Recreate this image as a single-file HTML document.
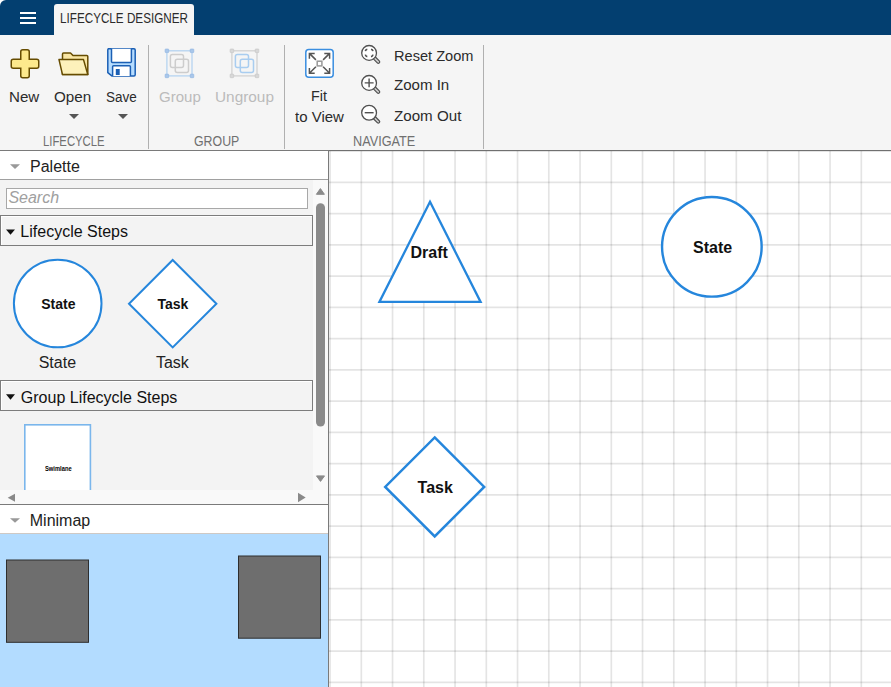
<!DOCTYPE html>
<html><head><meta charset="utf-8">
<style>
html,body{margin:0;padding:0;width:891px;height:687px;overflow:hidden;background:#fff;position:relative;font-family:"Liberation Sans",sans-serif;}
.a{position:absolute;}
.t{position:absolute;line-height:1;white-space:nowrap;font-family:"Liberation Sans",sans-serif;}
svg{position:absolute;overflow:visible}
</style></head><body>

<!-- top bar -->
<div class="a" style="left:0;top:0;width:891px;height:35px;background:#033f70;border-top-left-radius:6px;"></div>
<div class="a" style="left:20px;top:12px;width:16px;height:2px;background:#fff"></div>
<div class="a" style="left:20px;top:17px;width:16px;height:2px;background:#fff"></div>
<div class="a" style="left:20px;top:22px;width:16px;height:2px;background:#fff"></div>
<div class="a" style="left:54px;top:4px;width:140px;height:31px;background:#f5f5f5;border-radius:3px 3px 0 0"></div>

<!-- ribbon -->
<div class="a" style="left:0;top:35px;width:891px;height:115px;background:#f5f5f5"></div>
<div class="a" style="left:0;top:150px;width:891px;height:1px;background:#7a7a7a"></div>
<div class="a" style="left:148px;top:45px;width:1px;height:104px;background:#b0b0b0"></div>
<div class="a" style="left:284px;top:45px;width:1px;height:104px;background:#b0b0b0"></div>
<div class="a" style="left:483px;top:45px;width:1px;height:104px;background:#b0b0b0"></div>

<svg style="left:0;top:0" width="891" height="151">
 <!-- plus -->
 <path d="M22.75,49.75 h4.5 a2,2 0 0 1 2,2 v7.5 h7.5 a2,2 0 0 1 2,2 v5 a2,2 0 0 1 -2,2 h-7.5 v7.5 a2,2 0 0 1 -2,2 h-4.5 a2,2 0 0 1 -2,-2 v-7.5 h-7.5 a2,2 0 0 1 -2,-2 v-5 a2,2 0 0 1 2,-2 h7.5 v-7.5 a2,2 0 0 1 2,-2 z" fill="#fde98c" stroke="#664c00" stroke-width="1.5"/>
 <!-- folder -->
 <path d="M62.5,74.5 V54 a1,1 0 0 1 1,-1 H70.5 L73,55.6 H86.8 a1,1 0 0 1 1,1 V74.5 Z" fill="#f9e6a4" stroke="#664c00" stroke-width="1.5" stroke-linejoin="round"/>
 <path d="M59,59.6 H83.5 L87.8,74.6 H62.5 Z" fill="#fdf1bb" stroke="#664c00" stroke-width="1.5" stroke-linejoin="round"/>
 <!-- floppy -->
 <path d="M108.5,48.75 H134 a1.2,1.2 0 0 1 1.2,1.2 V74.7 a1.2,1.2 0 0 1 -1.2,1.2 H111.8 L107.8,72.7 V49.9 a1.2,1.2 0 0 1 0.7,-1.15 z" fill="#b5dcff" stroke="#1b5fb4" stroke-width="1.5" stroke-linejoin="round"/>
 <path d="M111.5,48.75 V61.5 a1,1 0 0 0 1,1 H130.4 a1,1 0 0 0 1,-1 V48.75" fill="#fff" stroke="#1b5fb4" stroke-width="1.5"/>
 <path d="M112.6,75.9 V66.8 a1,1 0 0 1 1,-1 H129.4 a1,1 0 0 1 1,1 V75.9" fill="#fff" stroke="#1b5fb4" stroke-width="1.5"/>
 <rect x="115.8" y="69" width="3.9" height="6" fill="#1b5fb4"/>
 <!-- dropdown arrows -->
 <path d="M69,114 H79 L74,119 Z" fill="#555"/>
 <path d="M118,114 H128 L123,119 Z" fill="#555"/>

 <!-- group icon -->
 <g>
  <rect x="166.9" y="50.8" width="25.1" height="25.1" fill="none" stroke="#b5d3f0" stroke-width="1.3"/>
  <rect x="170.4" y="54.4" width="13.1" height="13.1" rx="2" fill="none" stroke="#cdcdcd" stroke-width="1.5"/>
  <rect x="175.3" y="59.3" width="13.2" height="13.2" rx="2" fill="none" stroke="#cdcdcd" stroke-width="1.5"/>
  <rect x="165.1" y="49" width="3.6" height="3.6" rx="0.6" fill="#a9c7ea" stroke="#8fb3e0" stroke-width="0.6"/>
  <rect x="190.2" y="49" width="3.6" height="3.6" rx="0.6" fill="#a9c7ea" stroke="#8fb3e0" stroke-width="0.6"/>
  <rect x="165.1" y="74.1" width="3.6" height="3.6" rx="0.6" fill="#a9c7ea" stroke="#8fb3e0" stroke-width="0.6"/>
  <rect x="190.2" y="74.1" width="3.6" height="3.6" rx="0.6" fill="#a9c7ea" stroke="#8fb3e0" stroke-width="0.6"/>
 </g>
 <g transform="translate(65,0)">
  <rect x="166.9" y="50.8" width="25.1" height="25.1" fill="none" stroke="#d2d2d2" stroke-width="1.3"/>
  <rect x="170.4" y="54.4" width="13.1" height="13.1" rx="2" fill="none" stroke="#a9cdf0" stroke-width="1.5"/>
  <rect x="175.3" y="59.3" width="13.2" height="13.2" rx="2" fill="none" stroke="#a9cdf0" stroke-width="1.5"/>
  <rect x="165.1" y="49" width="3.6" height="3.6" rx="0.6" fill="#d8d8d8" stroke="#c4c4c4" stroke-width="0.6"/>
  <rect x="190.2" y="49" width="3.6" height="3.6" rx="0.6" fill="#d8d8d8" stroke="#c4c4c4" stroke-width="0.6"/>
  <rect x="165.1" y="74.1" width="3.6" height="3.6" rx="0.6" fill="#d8d8d8" stroke="#c4c4c4" stroke-width="0.6"/>
  <rect x="190.2" y="74.1" width="3.6" height="3.6" rx="0.6" fill="#d8d8d8" stroke="#c4c4c4" stroke-width="0.6"/>
 </g>

 <!-- fit to view -->
 <rect x="305.8" y="49.5" width="27.4" height="27.7" rx="3" fill="#fff" stroke="#3a8ee0" stroke-width="1.5"/>
 <g stroke="#555" stroke-width="1.5" fill="none">
  <path d="M314.7,53.4 H309.4 V58.7 M309.4,53.4 L315.9,59.9"/>
  <path d="M324.3,53.4 H329.6 V58.7 M329.6,53.4 L323.1,59.9"/>
  <path d="M314.7,73.3 H309.4 V68 M309.4,73.3 L315.9,66.8"/>
  <path d="M324.3,73.3 H329.6 V68 M329.6,73.3 L323.1,66.8"/>
 </g>
 <rect x="317.2" y="61.2" width="4.7" height="4.7" fill="none" stroke="#999" stroke-width="1.5"/>

 <!-- magnifiers -->
 <g stroke="#505050" stroke-width="1.3">
  <g>
   <path d="M374.6,58.2 L378.3,61.9" stroke="#505050" stroke-width="4" stroke-linecap="round"/>
   <path d="M374.6,58.2 L378.3,61.9" stroke="#d0d0d0" stroke-width="1.6" stroke-linecap="round"/>
   <circle cx="369.1" cy="52.9" r="7.4" fill="#fff"/>
   <path d="M365.3,51.2 a2.5,2.5 0 0 1 2,-2 M371,49.2 a2.5,2.5 0 0 1 2,2 M365.3,54.6 a2.5,2.5 0 0 0 2,2 M371,56.6 a2.5,2.5 0 0 0 2,-2" fill="none" stroke-width="1.6"/>
  </g>
  <g transform="translate(0,30)">
   <path d="M374.6,58.2 L378.3,61.9" stroke="#505050" stroke-width="4" stroke-linecap="round"/>
   <path d="M374.6,58.2 L378.3,61.9" stroke="#d0d0d0" stroke-width="1.6" stroke-linecap="round"/>
   <circle cx="369.1" cy="52.9" r="7.4" fill="#fff"/>
   <path d="M364.7,52.9 H373.6 M369.1,48.5 V57.3" fill="none" stroke-width="1.4"/>
  </g>
  <g transform="translate(0,59.8)">
   <path d="M374.6,58.2 L378.3,61.9" stroke="#505050" stroke-width="4" stroke-linecap="round"/>
   <path d="M374.6,58.2 L378.3,61.9" stroke="#d0d0d0" stroke-width="1.6" stroke-linecap="round"/>
   <circle cx="369.1" cy="52.9" r="7.4" fill="#fff"/>
   <path d="M364.7,52.9 H373.6" fill="none" stroke-width="1.4"/>
  </g>
 </g>
</svg>


<!-- left panel -->
<div class="a" style="left:0;top:151px;width:328px;height:536px;background:#f3f3f3"></div>
<div class="a" style="left:328px;top:151px;width:1px;height:536px;background:#7a7a7a"></div>
<div class="a" style="left:0;top:151px;width:328px;height:28px;background:#fff"></div>
<div class="a" style="left:0;top:179px;width:328px;height:1px;background:#a0a0a0"></div>
<svg style="left:0;top:0" width="330" height="687">
 <path d="M10,164.3 H20 L15,169 Z" fill="#999"/>
</svg>

<!-- scrollbar area -->
<div class="a" style="left:313px;top:180px;width:15px;height:310px;background:#f9f9f9"></div>
<div class="a" style="left:0;top:490px;width:328px;height:14px;background:#f9f9f9"></div>
<svg style="left:0;top:0" width="330" height="687">
 <path d="M316.4,194.3 H324.4 L320.4,188.6 Z" fill="#8a8a8a" stroke="#8a8a8a" stroke-width="1" stroke-linejoin="round"/>
 <rect x="316" y="203.2" width="9" height="223.4" rx="4.5" fill="#8a8a8a"/>
 <path d="M316.5,475.9 H324.5 L320.5,481.4 Z" fill="#8a8a8a" stroke="#8a8a8a" stroke-width="1" stroke-linejoin="round"/>
 <path d="M15,493.8 V501.7 L7.7,497.7 Z" fill="#8a8a8a"/>
 <path d="M298,492.7 V502.3 L305.7,497.5 Z" fill="#8a8a8a"/>
</svg>

<!-- search -->
<div class="a" style="left:6px;top:188px;width:300px;height:19px;background:#fff;border:1px solid #a8a8a8"></div>

<!-- lifecycle steps header -->
<div class="a" style="left:0;top:215px;width:311px;height:29px;border:1px solid #7c7c7c;background:#f3f3f3;box-shadow:inset 1px 1px 0 #fff"></div>
<svg style="left:0;top:0" width="330" height="687">
 <path d="M6,229.4 H15 L10.5,234.8 Z" fill="#111"/>
 <circle cx="57.7" cy="303.5" r="43.8" fill="#fff" stroke="#2586dc" stroke-width="2"/>
 <path d="M172.7,260 L216.4,303.7 L172.7,347.4 L129,303.7 Z" fill="#fff" stroke="#2586dc" stroke-width="2"/>
</svg>

<div class="a" style="left:0;top:380px;width:311px;height:29px;border:1px solid #7c7c7c;background:#f3f3f3;box-shadow:inset 1px 1px 0 #fff"></div>
<svg style="left:0;top:0" width="330" height="687">
 <path d="M6,394.2 H15 L10.5,399.8 Z" fill="#111"/>
</svg>

<!-- swimlane card -->
<svg style="left:0;top:0" width="330" height="687"><rect x="24.8" y="424.8" width="65.6" height="80" fill="#fff" stroke="#7ab6ec" stroke-width="1.6"/></svg>
<div class="a" style="left:0;top:490px;width:313px;height:14px;background:#f9f9f9"></div>
<svg style="left:0;top:0" width="330" height="687">
 <path d="M15,493.8 V501.7 L7.7,497.7 Z" fill="#8a8a8a"/>
 <path d="M298,492.7 V502.3 L305.7,497.5 Z" fill="#8a8a8a"/>
</svg>

<!-- minimap -->
<div class="a" style="left:0;top:504px;width:328px;height:1px;background:#7a7a7a"></div>
<div class="a" style="left:0;top:505px;width:328px;height:28px;background:#fff"></div>
<div class="a" style="left:0;top:533px;width:328px;height:1px;background:#cfc9c4"></div>
<div class="a" style="left:0;top:534px;width:328px;height:153px;background:#b3dcff"></div>
<svg style="left:0;top:0" width="330" height="687">
 <path d="M10,518.3 H20 L15,522.8 Z" fill="#999"/>
 <rect x="6.5" y="560" width="82" height="82.3" fill="#6e6e6e" stroke="#2e2e2e" stroke-width="1"/>
 <rect x="238.5" y="556" width="82" height="82.2" fill="#6e6e6e" stroke="#2e2e2e" stroke-width="1"/>
</svg>

<!-- canvas -->
<svg style="left:0;top:0" width="891" height="687">
 <g stroke="#000" stroke-opacity="0.105" stroke-width="1.7">
<line x1="330.05" y1="151" x2="330.05" y2="687"/>
<line x1="361.30" y1="151" x2="361.30" y2="687"/>
<line x1="392.55" y1="151" x2="392.55" y2="687"/>
<line x1="423.80" y1="151" x2="423.80" y2="687"/>
<line x1="455.05" y1="151" x2="455.05" y2="687"/>
<line x1="486.30" y1="151" x2="486.30" y2="687"/>
<line x1="517.55" y1="151" x2="517.55" y2="687"/>
<line x1="548.80" y1="151" x2="548.80" y2="687"/>
<line x1="580.05" y1="151" x2="580.05" y2="687"/>
<line x1="611.30" y1="151" x2="611.30" y2="687"/>
<line x1="642.55" y1="151" x2="642.55" y2="687"/>
<line x1="673.80" y1="151" x2="673.80" y2="687"/>
<line x1="705.05" y1="151" x2="705.05" y2="687"/>
<line x1="736.30" y1="151" x2="736.30" y2="687"/>
<line x1="767.55" y1="151" x2="767.55" y2="687"/>
<line x1="798.80" y1="151" x2="798.80" y2="687"/>
<line x1="830.05" y1="151" x2="830.05" y2="687"/>
<line x1="861.30" y1="151" x2="861.30" y2="687"/>
<line x1="892.55" y1="151" x2="892.55" y2="687"/>
<line x1="329" y1="151.20" x2="891" y2="151.20"/>
<line x1="329" y1="182.45" x2="891" y2="182.45"/>
<line x1="329" y1="213.70" x2="891" y2="213.70"/>
<line x1="329" y1="244.95" x2="891" y2="244.95"/>
<line x1="329" y1="276.20" x2="891" y2="276.20"/>
<line x1="329" y1="307.45" x2="891" y2="307.45"/>
<line x1="329" y1="338.70" x2="891" y2="338.70"/>
<line x1="329" y1="369.95" x2="891" y2="369.95"/>
<line x1="329" y1="401.20" x2="891" y2="401.20"/>
<line x1="329" y1="432.45" x2="891" y2="432.45"/>
<line x1="329" y1="463.70" x2="891" y2="463.70"/>
<line x1="329" y1="494.95" x2="891" y2="494.95"/>
<line x1="329" y1="526.20" x2="891" y2="526.20"/>
<line x1="329" y1="557.45" x2="891" y2="557.45"/>
<line x1="329" y1="588.70" x2="891" y2="588.70"/>
<line x1="329" y1="619.95" x2="891" y2="619.95"/>
<line x1="329" y1="651.20" x2="891" y2="651.20"/>
<line x1="329" y1="682.45" x2="891" y2="682.45"/>
 </g>
 <path d="M430,201.8 L480.6,301.9 L379.4,301.9 Z" fill="#fff" stroke="#2586dc" stroke-width="2.3"/>
 <circle cx="711.85" cy="246.85" r="49.8" fill="#fff" stroke="#2586dc" stroke-width="2.4"/>
 <path d="M434.7,437.4 L484.2,486.9 L434.7,536.4 L385.2,486.9 Z" fill="#fff" stroke="#2586dc" stroke-width="2.5"/>
</svg>

<!-- TEXTS -->
<div class="t" style="left:59.66px;top:10.93px;font-size:14.20px;font-weight:400;font-style:normal;color:#2b2b2b;transform:scaleX(0.824);transform-origin:0 0">LIFECYCLE DESIGNER</div>
<div class="t" style="left:9.19px;top:88.82px;font-size:15.51px;font-weight:400;font-style:normal;color:#2b2b2b;transform:scaleX(0.976);transform-origin:0 0">New</div>
<div class="t" style="left:54.09px;top:88.82px;font-size:15.51px;font-weight:400;font-style:normal;color:#2b2b2b;transform:scaleX(0.980);transform-origin:0 0">Open</div>
<div class="t" style="left:106.36px;top:88.82px;font-size:15.51px;font-weight:400;font-style:normal;color:#2b2b2b;transform:scaleX(0.872);transform-origin:0 0">Save</div>
<div class="t" style="left:43.19px;top:135.07px;font-size:13.91px;font-weight:400;font-style:normal;color:#707070;transform:scaleX(0.813);transform-origin:0 0">LIFECYCLE</div>
<div class="t" style="left:158.85px;top:88.52px;font-size:15.51px;font-weight:400;font-style:normal;color:#bbb;transform:scaleX(0.970);transform-origin:0 0">Group</div>
<div class="t" style="left:214.92px;top:88.52px;font-size:15.51px;font-weight:400;font-style:normal;color:#bbb;transform:scaleX(0.991);transform-origin:0 0">Ungroup</div>
<div class="t" style="left:193.88px;top:134.67px;font-size:13.91px;font-weight:400;font-style:normal;color:#707070;transform:scaleX(0.888);transform-origin:0 0">GROUP</div>
<div class="t" style="left:311.05px;top:89.26px;font-size:14.64px;font-weight:400;font-style:normal;color:#2b2b2b;transform:scaleX(0.979);transform-origin:0 0">Fit</div>
<div class="t" style="left:295.25px;top:108.89px;font-size:15.07px;font-weight:400;font-style:normal;color:#2b2b2b;transform:scaleX(0.995);transform-origin:0 0">to View</div>
<div class="t" style="left:393.53px;top:47.99px;font-size:15.07px;font-weight:400;font-style:normal;color:#2b2b2b;transform:scaleX(0.968);transform-origin:0 0">Reset Zoom</div>
<div class="t" style="left:394.25px;top:78.43px;font-size:14.78px;font-weight:400;font-style:normal;color:#2b2b2b;transform:scaleX(1.020);transform-origin:0 0">Zoom In</div>
<div class="t" style="left:394.25px;top:108.09px;font-size:15.07px;font-weight:400;font-style:normal;color:#2b2b2b;transform:scaleX(1.006);transform-origin:0 0">Zoom Out</div>
<div class="t" style="left:352.58px;top:134.67px;font-size:13.91px;font-weight:400;font-style:normal;color:#707070;transform:scaleX(0.912);transform-origin:0 0">NAVIGATE</div>
<div class="t" style="left:30.04px;top:159.00px;font-size:16.00px;font-weight:400;font-style:normal;color:#222;transform:scaleX(1.000);transform-origin:0 0">Palette</div>
<div class="t" style="left:8.38px;top:190.40px;font-size:16.00px;font-weight:400;font-style:italic;color:#a0a0a0;transform:scaleX(1.000);transform-origin:0 0">Search</div>
<div class="t" style="left:20.35px;top:224.00px;font-size:16.00px;font-weight:400;font-style:normal;color:#111;transform:scaleX(1.000);transform-origin:0 0">Lifecycle Steps</div>
<div class="t" style="left:41.28px;top:297.10px;font-size:14.00px;font-weight:700;font-style:normal;color:#111;transform:scaleX(1.000);transform-origin:0 0">State</div>
<div class="t" style="left:157.52px;top:297.10px;font-size:14.00px;font-weight:700;font-style:normal;color:#111;transform:scaleX(1.000);transform-origin:0 0">Task</div>
<div class="t" style="left:38.69px;top:355.20px;font-size:16.00px;font-weight:400;font-style:normal;color:#222;transform:scaleX(1.000);transform-origin:0 0">State</div>
<div class="t" style="left:155.91px;top:355.20px;font-size:16.00px;font-weight:400;font-style:normal;color:#222;transform:scaleX(1.000);transform-origin:0 0">Task</div>
<div class="t" style="left:20.83px;top:389.50px;font-size:16.00px;font-weight:400;font-style:normal;color:#111;transform:scaleX(1.000);transform-origin:0 0">Group Lifecycle Steps</div>
<div class="t" style="left:29.77px;top:513.40px;font-size:16.00px;font-weight:400;font-style:normal;color:#222;transform:scaleX(1.000);transform-origin:0 0">Minimap</div>
<div class="t" style="left:410.53px;top:245.00px;font-size:16.00px;font-weight:700;font-style:normal;color:#111;transform:scaleX(1.000);transform-origin:0 0">Draft</div>
<div class="t" style="left:692.99px;top:239.90px;font-size:16.00px;font-weight:700;font-style:normal;color:#111;transform:scaleX(1.000);transform-origin:0 0">State</div>
<div class="t" style="left:417.55px;top:479.90px;font-size:16.00px;font-weight:700;font-style:normal;color:#111;transform:scaleX(1.000);transform-origin:0 0">Task</div>
<div class="t" style="left:44.68px;top:466.01px;font-size:6.57px;font-weight:700;font-style:normal;color:#000;transform:scaleX(0.880);transform-origin:0 0">Swimlane</div>
</body></html>
